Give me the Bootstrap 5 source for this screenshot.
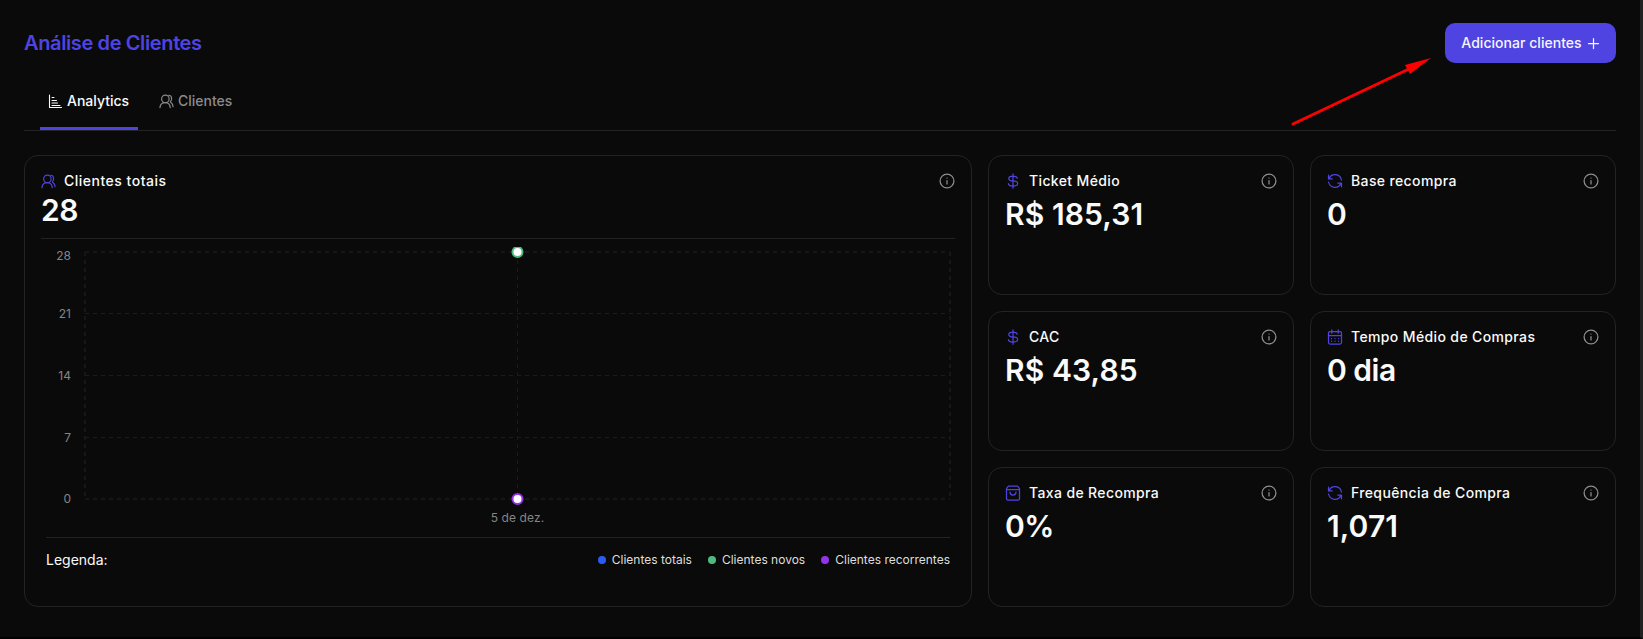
<!DOCTYPE html>
<html lang="pt-BR">
<head>
<meta charset="utf-8">
<meta name="viewport" content="width=device-width, initial-scale=1">
<title>Análise de Clientes</title>
<link rel="stylesheet" href="https://cdn.jsdelivr.net/npm/bootstrap@5.3.0/dist/css/bootstrap.min.css">
<style>
:root{--brand:#4f44e1;--line:#232323}
html{height:100%;overflow:hidden;background:#0a0a0a}
body{height:639px;background:#0a0a0a;color:#fafafa;font-family:Inter,sans-serif;font-size:14px;line-height:20px;border-right:3px solid #212121;border-bottom:2px solid #000;overflow:hidden}
.page{padding:23px 24px 0 24px}
.page-title{font-size:20px;line-height:28px;font-weight:600;color:var(--brand);letter-spacing:-.38px}
.btn-brand{--bs-btn-color:#f5f5ff;--bs-btn-bg:var(--brand);--bs-btn-hover-bg:#5b51e8;--bs-btn-hover-color:#fff;width:171px;height:40px;border-radius:10px;font-size:14px;font-weight:500;padding:0 0 1px;gap:4px;letter-spacing:.03px}
.tabs{height:51px;border-bottom:1px solid var(--line);margin-top:17px;padding-left:16px;gap:13px}
.tabs .nav-link{color:#8b8b8b;font-weight:500;padding:0 8px 5px;height:50px;gap:4px;border-bottom:3px solid transparent;border-radius:0}
.tabs .nav-link.active{color:#fafafa;border-bottom-color:var(--brand);width:98px}
.board{display:grid;grid-template-columns:948px 306px 306px;grid-template-rows:repeat(3,140px);gap:16px;margin-top:24px}
.panel{background:#0a0a0a;border:1px solid var(--line);border-radius:14px;padding:15px 16px 0;color:#fafafa}
.panel-main{grid-row:span 3}
.panel-name{font-weight:500;letter-spacing:.37px}
.figure-value{font-size:30px;line-height:38px;font-weight:600;letter-spacing:-.5px}
.figure-value.money{letter-spacing:.1px}
.ic{fill:none;stroke:currentColor;stroke-width:1.25;stroke-linecap:round;stroke-linejoin:round;flex:none}
.accent{color:var(--brand)}
.info{color:#8f8f8f}
.chart{display:block;margin:8px 0 0 -1px}
.chart text{fill:#858585;font-size:12px}
.legend-row{border-top:1px solid var(--line);margin:0 5px;padding-top:12px}
.key{font-size:12px;line-height:20px;gap:6px;color:#dedede}
.dot{width:8px;height:8px;border-radius:50%}
.pointer-arrow{left:1285px;top:52px}
</style>
</head>
<body>
<svg class="d-none">
<symbol id="users" viewBox="0 0 16 16"><circle cx="6.8" cy="5.2" r="4"/><path d="M1 14.500C1.300 11 3.500 9.200 6.800 9.200s4.900 1.800 5.200 5.300M10.300 1.300C14 1.300 14.300 6.300 12.100 8.300M12.200 8.500C14.200 9.900 14.900 11.500 15 13.600"/></symbol>
<symbol id="refresh" viewBox="0 0 16 16"><path d="M2 5.700A6.500 6.500 0 0 1 14.400 7M1.500 2.200v3.700h3.700M14 10.300A6.500 6.500 0 0 1 1.600 9M14.500 13.800v-3.700h-3.700"/></symbol>
<symbol id="dollar" viewBox="0 0 16 16"><path d="M8 .8v14.400M12.200 5.200C12 3.700 10.700 3 8 3 5.300 3 3.800 3.800 3.800 5.400S5.300 7.900 8 7.900s4.700.8 4.700 2.500S11 13 8 13s-4.400-.8-4.600-2.400"/></symbol>
<symbol id="calendar" viewBox="0 0 16 16"><rect x="1.500" y="2.500" width="13" height="12.500" rx="1.500"/><path d="M1.500 6.500h13M4.800.8v3.400M11.200.8v3.400M4.500 9.500h.1M8 9.500h.1M11.500 9.500h.1M4.500 12.200h.1M8 12.200h.1M11.500 12.200h.1"/></symbol>
<symbol id="bag" viewBox="0 0 16 16"><path d="M1.500 3.700 3.500 1h9l2 2.700v10.100a1.200 1.200 0 0 1-1.200 1.200H2.700a1.200 1.200 0 0 1-1.200-1.200zM1.500 4.500h13M5 7a3 3 0 0 0 6 0"/></symbol>
<symbol id="info" viewBox="0 0 16 16"><circle cx="8" cy="8" r="6.900"/><path d="M8 7.500v3.400M8 5v.1"/></symbol>
</svg>
<main class="page">
  <header class="d-flex justify-content-between align-items-center">
    <h1 class="page-title m-0">Análise de Clientes</h1>
    <button class="btn btn-brand d-flex align-items-center justify-content-center">Adicionar clientes <svg class="ic" width="14" height="14" viewBox="0 0 14 14"><path d="M7.500 2.500v10M2.500 7.500h10"/></svg></button>
  </header>
  <nav class="tabs nav flex-nowrap">
    <a class="nav-link active d-flex align-items-center" href="#"><svg class="ic" width="15" height="15" viewBox="0 0 15 15"><path d="M1.500 1v12.500h12M4 3.500h2M4 6.500h4.500M4 9h5.500M4 11.500h8" stroke-width="1.100"/></svg>Analytics</a>
    <a class="nav-link d-flex align-items-center" href="#"><svg class="ic" width="15" height="15"><use href="#users"/></svg>Clientes</a>
  </nav>
  <section class="board">
    <article class="panel panel-main">
      <div class="d-flex align-items-center gap-2"><svg class="ic accent" width="15" height="15"><use href="#users"/></svg><span class="panel-name" style="letter-spacing:.5px">Clientes totais</span><svg class="ic info ms-auto" width="16" height="16"><use href="#info"/></svg></div>
      <div class="figure-value">28</div>
      <svg class="chart" width="916" height="300" viewBox="40 237 916 300">
        <path d="M41 238.500h914" stroke="#232323"/>
        <g fill="none" stroke="#1b1b1b" stroke-dasharray="4 4"><path stroke="#161616" stroke-width="2" d="M85 252h865M85 499h865M85 252v247M950 252v247"/><path d="M85 313.500h865M85 375.500h865M85 437.500h865M517.500 252v247"/></g>
        <g text-anchor="end"><text x="71" y="260">28</text><text x="71" y="318">21</text><text x="71" y="380">14</text><text x="71" y="442">7</text><text x="71" y="503">0</text></g>
        <text x="517.500" y="522" text-anchor="middle" letter-spacing=".1">5 de dez.</text>
        <clipPath id="plot"><path d="M40 247h916v260H40z"/></clipPath>
        <g fill="#fff" stroke-width="2" clip-path="url(#plot)"><circle cx="517.500" cy="252" r="5" stroke="#4dba80"/><circle cx="517.500" cy="499" r="5" stroke="#9333ea"/></g>
      </svg>
      <div class="legend-row d-flex align-items-center">
        <span class="legend-name">Legenda:</span>
        <div class="d-flex gap-3 ms-auto">
          <span class="key d-flex align-items-center"><i class="dot" style="background:#2b5bf5"></i>Clientes totais</span>
          <span class="key d-flex align-items-center"><i class="dot" style="background:#4dba80"></i>Clientes novos</span>
          <span class="key d-flex align-items-center"><i class="dot" style="background:#9333ea"></i>Clientes recorrentes</span>
        </div>
      </div>
    </article>
    <article class="panel"><div class="d-flex align-items-center gap-2"><svg class="ic accent" width="16" height="16"><use href="#dollar"/></svg><span class="panel-name">Ticket Médio</span><svg class="ic info ms-auto" width="16" height="16"><use href="#info"/></svg></div><div class="figure-value money mt-1">R$ 185,31</div></article>
    <article class="panel"><div class="d-flex align-items-center gap-2"><svg class="ic accent" width="16" height="16"><use href="#refresh"/></svg><span class="panel-name">Base recompra</span><svg class="ic info ms-auto" width="16" height="16"><use href="#info"/></svg></div><div class="figure-value mt-1">0</div></article>
    <article class="panel"><div class="d-flex align-items-center gap-2"><svg class="ic accent" width="16" height="16"><use href="#dollar"/></svg><span class="panel-name">CAC</span><svg class="ic info ms-auto" width="16" height="16"><use href="#info"/></svg></div><div class="figure-value money mt-1">R$ 43,85</div></article>
    <article class="panel"><div class="d-flex align-items-center gap-2"><svg class="ic accent" width="16" height="16"><use href="#calendar"/></svg><span class="panel-name">Tempo Médio de Compras</span><svg class="ic info ms-auto" width="16" height="16"><use href="#info"/></svg></div><div class="figure-value mt-1">0 dia</div></article>
    <article class="panel"><div class="d-flex align-items-center gap-2"><svg class="ic accent" width="16" height="16"><use href="#bag"/></svg><span class="panel-name">Taxa de Recompra</span><svg class="ic info ms-auto" width="16" height="16"><use href="#info"/></svg></div><div class="figure-value mt-1">0%</div></article>
    <article class="panel"><div class="d-flex align-items-center gap-2"><svg class="ic accent" width="16" height="16"><use href="#refresh"/></svg><span class="panel-name">Frequência de Compra</span><svg class="ic info ms-auto" width="16" height="16"><use href="#info"/></svg></div><div class="figure-value money mt-1">1,071</div></article>
  </section>
</main>
<svg class="pointer-arrow position-absolute" width="150" height="80" viewBox="1285 52 150 80"><path d="M1293 124 1411 68" stroke="#f00" stroke-width="3" stroke-linecap="round"/><path d="M1431 58 1405 65 1410 74z" fill="#f00"/></svg>
<script src="https://cdn.jsdelivr.net/npm/bootstrap@5.3.0/dist/js/bootstrap.bundle.min.js"></script>
</body>
</html>
